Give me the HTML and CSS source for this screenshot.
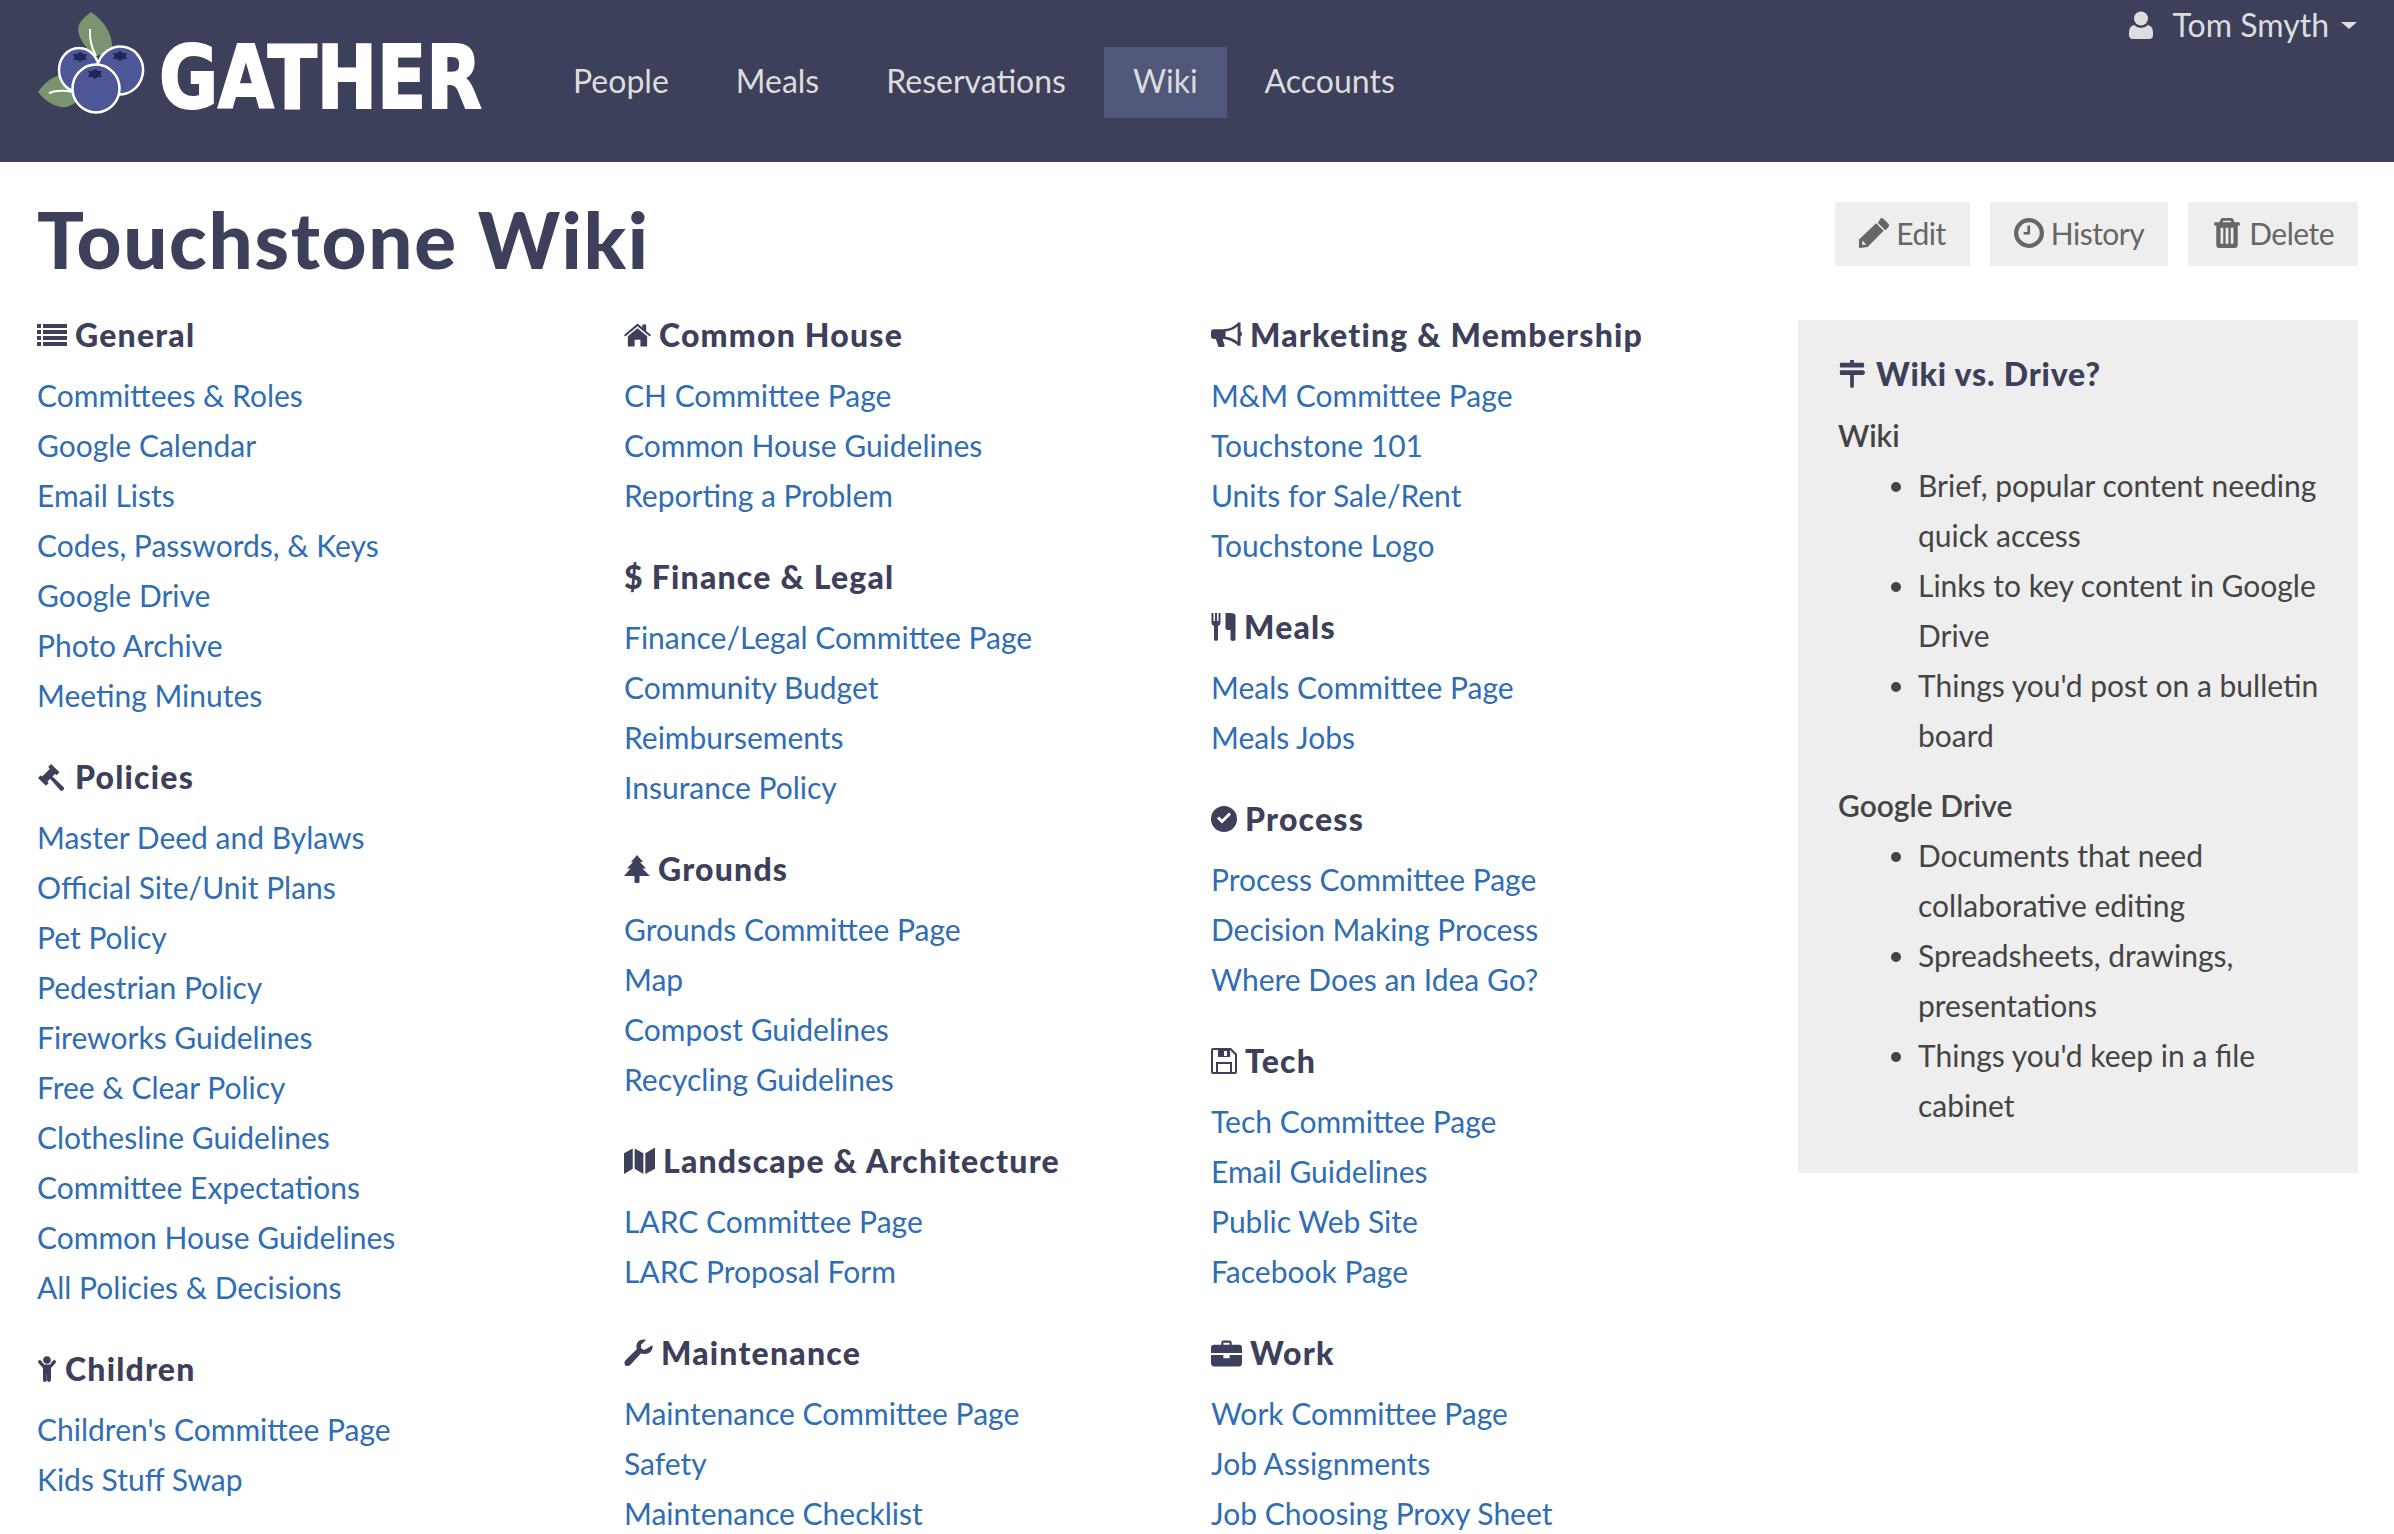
FILE: index.html
```html
<!DOCTYPE html>
<html lang="en">
<head>
    <meta charset="UTF-8">
    <title>Touchstone Wiki</title>
    <link rel="stylesheet" href="styles.css">
</head>
<body>

    <!-- icon sprite -->
    <svg class="sprite" xmlns="http://www.w3.org/2000/svg">
        <symbol id="i-list" viewBox="0 0 30 24">
            <path d="M0 1h4v4H0zM6 1h24v4H6zM0 7h4v4H0zM6 7h24v4H6zM0 13h4v4H0zM6 13h24v4H6zM0 19h4v4H0zM6 19h24v4H6z"/>
        </symbol>
        <symbol id="i-gavel" viewBox="0 0 30 30">
            <path d="M14 1l9 9-3 3-1.500-1.500-3 3 12 11.500q1 1 0 2.500l-1 1q-1.500 1-2.500 0L13 17l-3 3 1.500 1.500-3 3L0 16l3-3 1.500 1.500 8-8L11 4z"/>
        </symbol>
        <symbol id="i-child" viewBox="0 0 20 26">
            <circle cx="10" cy="4" r="3.800"/>
            <path d="M1.500 4.500q1.500-1 2.500 0L7 8.500h6l3-4q1-1 2.500 0 1 1 0 2.500L14 12v12q-.2 2-2 2t-2-2v-6h-.2v6q0 2-1.900 2T6 24V12L1.500 7q-1-1.500 0-2.500z"/>
        </symbol>
        <symbol id="i-home" viewBox="0 0 28 24">
            <path d="M14 0l5 4.300V1h4v6.800L28 12l-1.300 1.500L14 3 1.300 13.500 0 12zM14 5l10 8.300V24h-7v-7h-6v7H4V13.300z"/>
        </symbol>
        <symbol id="i-tree" viewBox="0 0 26 28">
            <path d="M13 0l6 7h-3l6 6.500h-3.500L26 21H15.500v5.500q0 1.500-1.500 1.500h-2q-1.500 0-1.500-1.500V21H0l6.500-7.500H3L9 7H7z"/>
        </symbol>
        <symbol id="i-map" viewBox="0 0 32 28">
            <path d="M0 6l9-5v21l-9 5.500zM11 1l9 5v21.500L11 22zM22 6l10-6v22l-10 5.500z"/>
        </symbol>
        <symbol id="i-wrench" viewBox="0 0 28 26">
            <path d="M27.500 5.500q.5 4-2 6.500t-6.500 2q-1.500-.2-2.500-.8L6 24.500q-1.500 1.500-3.500 1-1.500-.5-2-2-.5-2 1-3.500l11-10.800q-1-2.500-.2-5T16 .5q2.500-1 5.500-.2L16.500 5v3.500l3 1.700z"/>
        </symbol>
        <symbol id="i-bullhorn" viewBox="0 0 32 26">
            <path d="M28 0h2.500v9.500q1.500.5 1.500 2.500t-1.500 2.500V24H28q-6-6-15-7h-1l2 6.500q.3 1.500-1 2h-4q-1 0-1.500-1L5 17H3q-3 0-3-3v-4q0-3 3-3h9q10 0 16-7zm-.5 4q-5 4.500-12.500 5.300v5.400q7.500.8 12.500 5.300z"/>
        </symbol>
        <symbol id="i-cutlery" viewBox="0 0 24 28">
            <path d="M0 0h2v8h1.500V0h2v8H7V0h2v10q0 2-2.500 3v13q0 2-2 2t-2-2V13Q0 12 0 10zM14 0h5q4 0 5 2v24q0 2-2.500 2T19 26v-9h-3q-2 0-2-2z"/>
        </symbol>
        <symbol id="i-check" viewBox="0 0 26 26">
            <path fill-rule="evenodd" d="M13 0a13 13 0 1 1 0 26a13 13 0 0 1 0-26zM20 8.500l-2-2-7 7-3-3-2 2 5 5z"/>
        </symbol>
        <symbol id="i-floppy" viewBox="0 0 26 26">
            <path fill-rule="evenodd" d="M2 0h18l6 6v18q0 2-2 2H2q-2 0-2-2V2q0-2 2-2zM2 2v22h3V14h16v10h3V7l-5-5v7H7V2zM7 16v8h12v-8zM13 3v5h3V3z"/>
        </symbol>
        <symbol id="i-briefcase" viewBox="0 0 30 26">
            <path fill-rule="evenodd" d="M10 5V3q0-2 2-2h6q2 0 2 2v2h7q3 0 3 3v5H0V8q0-3 3-3zM12 3v2h6V3zM0 15h12v3h6v-3h12v8q0 3-3 3H3q-3 0-3-3z"/>
        </symbol>
        <symbol id="i-signs" viewBox="0 0 28 30">
            <path d="M12 0h4v3h10q1 0 1 1v3q0 1-1 1H2q-1 0-1-1V4q0-1 1-1h10zM2 11h24q2 1 2 2.500T26 16H16v12.500q0 1.500-2 1.500t-2-1.500V16H2q-1 0-1-1v-3q0-1 1-1z"/>
        </symbol>
        <symbol id="i-user" viewBox="0 0 24 28">
            <circle cx="12" cy="7.500" r="7"/>
            <path d="M5 14q3 3 7 3t7-3q5 1 5 8v2q0 4-4 4H4q-4 0-4-4v-2q0-7 5-8z"/>
        </symbol>
        <symbol id="i-pencil" viewBox="0 0 28 28">
            <path fill-rule="evenodd" d="M21 0q1 0 2 1l4 4q1 1 1 2t-1 2l-2.500 2.500-7-7L20 1q0-1 1-1zM16 5l7 7-15 15-8 1V20zM3 21v4h4z"/>
        </symbol>
        <symbol id="i-clock" viewBox="0 0 28 28">
            <path fill-rule="evenodd" d="M14 0a14 14 0 1 1 0 28a14 14 0 0 1 0-28zM14 4a10 10 0 1 0 0 20a10 10 0 0 0 0-20zM15 7v8.500H9V13h3.500V7z"/>
        </symbol>
        <symbol id="i-trash" viewBox="0 0 24 28">
            <path fill-rule="evenodd" d="M8 0h8q1.500 0 2 1.500L19 4h4q1 0 1 1v2h-2v18q0 3-3 3H5q-3 0-3-3V7H0V5q0-1 1-1h4l1-2.500Q6.500 0 8 0zM8 4h8l-.6-1.500H8.600zM6 9v15h2.500V9zM10.700 9v15h2.600V9zM15.500 9v15H18V9z"/>
        </symbol>
    </svg>

    <div class="navbar">
        <a class="brand" href="#">
            <svg class="logo" viewBox="38 12 107 103" xmlns="http://www.w3.org/2000/svg">
                <path d="M91 12q20 14 21 33q0 5-4 9l-14 2q-14-14-16-25q-1-9 13-19z" fill="#7a9470"/>
                <path d="M90 29q-1 14 6 27" fill="none" stroke="#fff" stroke-width="2"/>
                <path d="M38 92q12-17 26-17q7 0 11 6v22q-7 5-14 4q-13-2-23-15z" fill="#7a9470"/>
                <path d="M49 93q10-4 24-1" fill="none" stroke="#fff" stroke-width="2"/>
                <ellipse cx="79" cy="70" rx="20" ry="22" fill="#4d5696" stroke="#fff" stroke-width="2.500"/>
                <ellipse cx="120" cy="70.500" rx="23" ry="24" fill="#4d5696" stroke="#fff" stroke-width="2.500" transform="rotate(12 120 70.500)"/>
                <ellipse cx="96" cy="88.500" rx="23.500" ry="24" fill="#4d5696" stroke="#fff" stroke-width="2.500"/>
                <path d="M80 52l3 2 4 0-1.500 3 1.500 3-4 0-3 2-3-2-4 0 1.500-3-1.500-3 4 0z" fill="#1e2757"/>
                <path d="M120 51l3 2 4 0-1.500 3 1.500 3-4 0-3 2-3-2-4 0 1.500-3-1.500-3 4 0z" fill="#1e2757"/>
                <path d="M95 69l3 2 4 0-1.500 3 1.500 3-4 0-3 2-3-2-4 0 1.500-3-1.500-3 4 0z" fill="#1e2757"/>
            </svg>
            <span class="brand-name">GATHER</span>
        </a>
        <ul class="nav">
            <li><a href="#">People</a></li>
            <li><a href="#">Meals</a></li>
            <li><a href="#">Reservations</a></li>
            <li class="active"><a href="#">Wiki</a></li>
            <li><a href="#">Accounts</a></li>
        </ul>
        <a class="user-menu" href="#">
            <svg class="user-icon"><use href="#i-user"/></svg>
            <span>Tom Smyth</span>
            <span class="caret"></span>
        </a>
    </div>

    <div class="page">
        <div class="title-row">
            <h1>Touchstone Wiki</h1>
            <div class="actions">
                <a class="btn" href="#"><svg class="ico"><use href="#i-pencil"/></svg>Edit</a>
                <a class="btn" href="#"><svg class="ico"><use href="#i-clock"/></svg>History</a>
                <a class="btn" href="#"><svg class="ico"><use href="#i-trash"/></svg>Delete</a>
            </div>
        </div>

        <div class="wiki-grid">
            <div class="col">
                <div class="section">
                    <h2><svg class="h-ico w-list"><use href="#i-list"/></svg>General</h2>
                    <a href="#">Committees &amp; Roles</a>
                    <a href="#">Google Calendar</a>
                    <a href="#">Email Lists</a>
                    <a href="#">Codes, Passwords, &amp; Keys</a>
                    <a href="#">Google Drive</a>
                    <a href="#">Photo Archive</a>
                    <a href="#">Meeting Minutes</a>
                </div>
                <div class="section">
                    <h2><svg class="h-ico w-gavel"><use href="#i-gavel"/></svg>Policies</h2>
                    <a href="#">Master Deed and Bylaws</a>
                    <a href="#">Official Site/Unit Plans</a>
                    <a href="#">Pet Policy</a>
                    <a href="#">Pedestrian Policy</a>
                    <a href="#">Fireworks Guidelines</a>
                    <a href="#">Free &amp; Clear Policy</a>
                    <a href="#">Clothesline Guidelines</a>
                    <a href="#">Committee Expectations</a>
                    <a href="#">Common House Guidelines</a>
                    <a href="#">All Policies &amp; Decisions</a>
                </div>
                <div class="section">
                    <h2><svg class="h-ico w-child"><use href="#i-child"/></svg>Children</h2>
                    <a href="#">Children's Committee Page</a>
                    <a href="#">Kids Stuff Swap</a>
                </div>
            </div>

            <div class="col">
                <div class="section">
                    <h2><svg class="h-ico w-home"><use href="#i-home"/></svg>Common House</h2>
                    <a href="#">CH Committee Page</a>
                    <a href="#">Common House Guidelines</a>
                    <a href="#">Reporting a Problem</a>
                </div>
                <div class="section">
                    <h2><span class="dollar">$</span>Finance &amp; Legal</h2>
                    <a href="#">Finance/Legal Committee Page</a>
                    <a href="#">Community Budget</a>
                    <a href="#">Reimbursements</a>
                    <a href="#">Insurance Policy</a>
                </div>
                <div class="section">
                    <h2><svg class="h-ico w-tree"><use href="#i-tree"/></svg>Grounds</h2>
                    <a href="#">Grounds Committee Page</a>
                    <a href="#">Map</a>
                    <a href="#">Compost Guidelines</a>
                    <a href="#">Recycling Guidelines</a>
                </div>
                <div class="section">
                    <h2><svg class="h-ico w-map"><use href="#i-map"/></svg>Landscape &amp; Architecture</h2>
                    <a href="#">LARC Committee Page</a>
                    <a href="#">LARC Proposal Form</a>
                </div>
                <div class="section">
                    <h2><svg class="h-ico w-wrench"><use href="#i-wrench"/></svg>Maintenance</h2>
                    <a href="#">Maintenance Committee Page</a>
                    <a href="#">Safety</a>
                    <a href="#">Maintenance Checklist</a>
                </div>
            </div>

            <div class="col">
                <div class="section">
                    <h2><svg class="h-ico w-bullhorn"><use href="#i-bullhorn"/></svg>Marketing &amp; Membership</h2>
                    <a href="#">M&amp;M Committee Page</a>
                    <a href="#">Touchstone 101</a>
                    <a href="#">Units for Sale/Rent</a>
                    <a href="#">Touchstone Logo</a>
                </div>
                <div class="section">
                    <h2><svg class="h-ico w-cutlery"><use href="#i-cutlery"/></svg>Meals</h2>
                    <a href="#">Meals Committee Page</a>
                    <a href="#">Meals Jobs</a>
                </div>
                <div class="section">
                    <h2><svg class="h-ico w-check"><use href="#i-check"/></svg>Process</h2>
                    <a href="#">Process Committee Page</a>
                    <a href="#">Decision Making Process</a>
                    <a href="#">Where Does an Idea Go?</a>
                </div>
                <div class="section">
                    <h2><svg class="h-ico w-floppy"><use href="#i-floppy"/></svg>Tech</h2>
                    <a href="#">Tech Committee Page</a>
                    <a href="#">Email Guidelines</a>
                    <a href="#">Public Web Site</a>
                    <a href="#">Facebook Page</a>
                </div>
                <div class="section">
                    <h2><svg class="h-ico w-briefcase"><use href="#i-briefcase"/></svg>Work</h2>
                    <a href="#">Work Committee Page</a>
                    <a href="#">Job Assignments</a>
                    <a href="#">Job Choosing Proxy Sheet</a>
                </div>
            </div>

            <div class="sidebar">
                <h2><svg class="h-ico w-signs"><use href="#i-signs"/></svg>Wiki vs. Drive?</h2>
                <p>Wiki</p>
                <ul>
                    <li>Brief, popular content needing quick access</li>
                    <li>Links to key content in Google Drive</li>
                    <li>Things you'd post on a bulletin board</li>
                </ul>
                <p>Google Drive</p>
                <ul>
                    <li>Documents that need collaborative editing</li>
                    <li>Spreadsheets, drawings, presentations</li>
                    <li>Things you'd keep in a file cabinet</li>
                </ul>
            </div>
        </div>
    </div>

</body>
</html>
```

FILE: styles.css
```css
/* page */
html, body {
    height: 100%;
    overflow: hidden;
}

body {
    margin: 0;
    background: #fff;
    color: #444;
    font-family: Lato, "Open Sans", sans-serif;
    font-size: 30px;
    line-height: 50px;
}

a {
    text-decoration: none;
}

.sprite {
    display: none;
}

/* top bar */
.navbar {
    display: flex;
    align-items: flex-start;
    height: 162px;
    padding: 0 37px 0 38px;
    background: #3c405b;
}

.brand {
    display: flex;
    align-items: center;
    width: 506px;
    height: 127px;
}

.logo {
    width: 107px;
    height: 103px;
    flex: none;
}

.brand-name {
    display: inline-block;
    margin: 28px 0 0 14px;
    color: #fff;
    font-family: "DejaVu Sans", sans-serif;
    font-size: 88px;
    font-weight: 700;
    font-stretch: condensed;
    line-height: 1;
    -webkit-text-stroke: 2px #fff;
    transform: scaleX(.91);
    transform-origin: left center;
}

.nav {
    display: flex;
    gap: 9px;
    list-style: none;
    margin: 47px 0 0;
    padding: 0;
}

.nav a {
    display: block;
    height: 71px;
    padding: 0 29px;
    color: #ddd;
    font-size: 32px;
    line-height: 68px;
}

.nav .active a {
    background: #50577a;
}

.user-menu {
    display: flex;
    align-items: center;
    height: 50px;
    margin-left: auto;
    color: #ddd;
    font-size: 32px;
}

.user-icon {
    width: 24px;
    height: 28px;
    margin-right: 20px;
    fill: #ddd;
}

.caret {
    width: 0;
    height: 0;
    margin-left: 12px;
    border-top: 7px solid #ddd;
    border-left: 8px solid transparent;
    border-right: 8px solid transparent;
}

/* content */
.page {
    padding: 0 36px 0 37px;
}

.title-row {
    display: flex;
    justify-content: space-between;
    align-items: flex-start;
    margin-top: 40px;
    margin-bottom: 32px;
}

h1 {
    margin: 0 0 2px;
    color: #3c405b;
    font-size: 78px;
    font-weight: 900;
    letter-spacing: 1.7px;
    line-height: 74px;
}

.actions {
    display: flex;
    gap: 20px;
}

.btn {
    display: flex;
    align-items: center;
    height: 62px;
    padding: 0 24px 2px;
    background: #eee;
    color: #666;
    letter-spacing: -.5px;
}

.ico {
    width: 30px;
    height: 30px;
    margin-right: 7px;
    fill: #666;
}

.wiki-grid {
    display: grid;
    grid-template-columns: 587px 587px 587px 560px;
}

.section {
    margin-bottom: 31px;
}

.section a {
    display: block;
    padding-bottom: 2px;
    color: #2f6db5;
    line-height: 48px;
}

h2 {
    display: flex;
    align-items: center;
    height: 50px;
    margin: 0 0 11px;
    color: #3c405b;
    font-size: 32px;
    font-weight: 900;
    letter-spacing: 1.2px;
}

.h-ico {
    height: 28px;
    margin-right: 8px;
    fill: #3c405b;
    flex: none;
}

.w-list { width: 30px; }
.w-gavel { width: 30px; }
.w-child { width: 20px; }
.w-home { width: 27px; }
.w-tree { width: 26px; }
.w-map { width: 31px; }
.w-wrench { width: 29px; }
.w-bullhorn { width: 31px; }
.w-cutlery { width: 25px; }
.w-check { width: 26px; }
.w-floppy { width: 26px; }
.w-briefcase { width: 31px; }
.w-signs { width: 28px; }

.dollar {
    margin-right: 8px;
}

/* side panel */
.sidebar {
    align-self: start;
    margin-top: 10px;
    padding: 29px 40px 43px;
    background: #eee;
}

.sidebar h2 {
    letter-spacing: .8px;
}

.sidebar h2 .h-ico {
    margin-right: 10px;
}

.sidebar p {
    margin: 0;
    font-weight: 600;
}

.sidebar ul {
    margin: 0 -12px 20px 0;
    padding-left: 80px;
}

.sidebar ul:last-child {
    margin-bottom: 0;
}
```
